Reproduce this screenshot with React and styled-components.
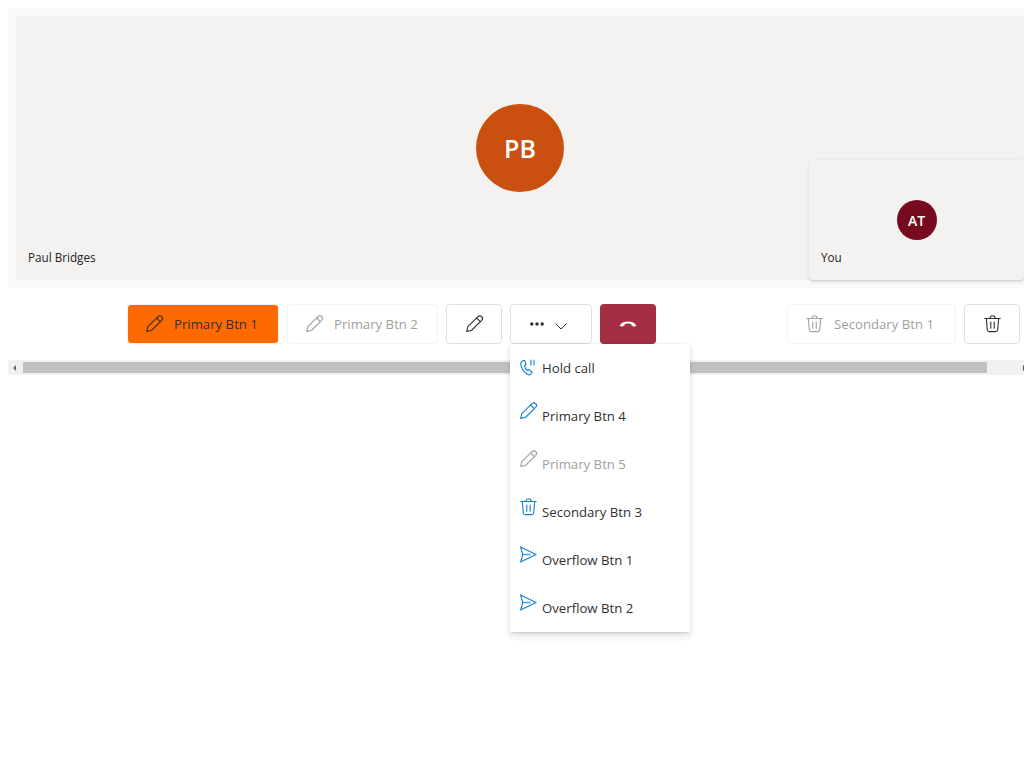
import React from "react";
import styled, { createGlobalStyle } from "styled-components";

// style

const GlobalStyle = createGlobalStyle`
  body {
    margin: 8px 0 0 8px;
    background: #ffffff;
    font-family: "Open Sans", "Noto Sans", sans-serif;
    color: #252423;
  }
  #root {
    width: 1016px;
    min-height: 760px;
  }
`;

const Stage = styled.section`
  position: relative;
  height: 280px;
  padding: 8px 0 8px 8px;
  box-sizing: border-box;
  background: #faf9f8;
`;

const MainTile = styled.div`
  position: relative;
  height: 264px;
  display: flex;
  align-items: center;
  justify-content: center;
  background: #f3f2f1;
  border-radius: 4px;
`;

const LocalTile = styled(MainTile)`
  position: absolute;
  right: 0;
  bottom: 8px;
  width: 215px;
  height: 120px;
  box-shadow: 0 1.6px 3.6px rgba(0, 0, 0, 0.11), 0 0.3px 0.9px rgba(0, 0, 0, 0.07);
`;

const Avatar = styled.div`
  width: ${(p) => p.$size}px;
  height: ${(p) => p.$size}px;
  display: flex;
  align-items: center;
  justify-content: center;
  border-radius: 50%;
  background: ${(p) => p.$color};
  color: #ffffff;
  font-size: ${(p) => p.$fontSize}px;
  font-weight: 600;
`;

const Label = styled.span`
  position: absolute;
  left: 12px;
  bottom: 15px;
  font-size: 11.7px;
  line-height: 16px;
  font-weight: 500;
  color: #252423;
`;

const Toolbar = styled.div`
  display: flex;
  padding: 16px 0 16px 119px;
`;

const Group = styled.div`
  display: flex;
  gap: 8px;
  margin-left: ${(p) => p.$offset || 0}px;
`;

const Button = styled.button`
  width: ${(p) => p.$width}px;
  height: 40px;
  padding: 0 0 0 ${(p) => p.$inset}px;
  display: flex;
  align-items: center;
  gap: ${(p) => p.$gap || 0}px;
  box-sizing: border-box;
  border: 1px solid ${(p) => (p.$disabled ? "#f3f2f1" : "#e1dfdd")};
  border-radius: 4px;
  background: #ffffff;
  color: ${(p) => (p.$disabled ? "#a19f9d" : "#323130")};
  font-family: inherit;
  font-size: 13.2px;
  white-space: nowrap;
`;

const PrimaryButton = styled(Button)`
  border-color: #f3f2f1;
  background: #ff6a00;
`;

const EndCallButton = styled(Button)`
  border: none;
  background: #a42e43;
  color: #ffffff;
`;

const MoreWrap = styled.div`
  position: relative;
`;

const Menu = styled.ul`
  position: absolute;
  top: 40px;
  left: 0;
  z-index: 2;
  width: 180px;
  margin: 0;
  padding: 0;
  list-style: none;
  background: #ffffff;
  border-radius: 2px;
  box-shadow: 0 3.2px 7.2px rgba(0, 0, 0, 0.13), 0 0.6px 1.8px rgba(0, 0, 0, 0.11);
`;

const MenuItem = styled.li`
  height: 48px;
  padding-left: 10px;
  display: flex;
  align-items: center;
  gap: 4px;
  font-size: 13.2px;
  color: ${(p) => (p.$disabled ? "#a19f9d" : "#323130")};

  svg {
    margin-bottom: ${(p) => p.$raise}px;
    color: ${(p) => (p.$disabled ? "#a19f9d" : "#0f7fd6")};
  }
`;

const ScrollTrack = styled.div`
  height: 15px;
  display: flex;
  overflow: hidden;
  background: #f1f1f1;
`;

const ScrollButton = styled.div`
  flex: none;
  width: 15px;
  display: flex;
  align-items: center;
  padding-left: ${(p) => p.$inset}px;
  box-sizing: border-box;
`;

const ScrollThumb = styled.div`
  flex: none;
  width: 964px;
  height: 11px;
  margin: 2px 32px 2px 0;
  background: #c1c1c1;
`;

const Arrow = styled.span`
  width: 0;
  height: 0;
  border-top: 3.5px solid transparent;
  border-bottom: 3.5px solid transparent;
  border-right: ${(p) => (p.$right ? "0" : "3.5px solid #6e6e6e")};
  border-left: ${(p) => (p.$right ? "3.5px solid #505050" : "0")};
`;

// icons

const Icon = ({ children }) => (
  <svg width="18" height="18" viewBox="0 0 18 18" fill="none" stroke="currentColor" strokeWidth="1.1" strokeLinejoin="round" strokeLinecap="round" style={{ flex: "none" }}>
    {children}
  </svg>
);

const Pencil = () => (
  <Icon>
    <path d="M.7 16.4 1.7 12c.07-.3.2-.5.4-.7L12 1.6a2.6 2.6 0 0 1 3.7 3.7L5.9 15c-.2.2-.45.35-.75.42L.7 16.4Z" />
    <path d="M10.6 3 14.3 6.7" />
  </Icon>
);

const Trash = () => (
  <Icon>
    <path d="M.8 3.5h15.4" />
    <path d="M5.8 3.5a2.7 2.7 0 0 1 5.4 0" />
    <path d="M2.3 3.5 3.3 15a2 2 0 0 0 2 1.6h6.4a2 2 0 0 0 2-1.6l1-11.5" />
    <path d="M6.8 7v6.3M10.2 7v6.3" />
  </Icon>
);

const Send = () => (
  <Icon>
    <path d="M.6 1 16 8.5.6 16l2.2-7.5L.6 1Z" />
    <path d="M3 8.5h7" strokeWidth="1.6" strokeOpacity="0.75" />
  </Icon>
);

const HoldCall = () => (
  <Icon>
    <path d="M4.6 1.2 2.5 2C.9 2.7.5 4.6 1 6.6c.9 3.5 3.2 6.6 6.3 8.6 1.5.9 3.2.7 4-.5l.8-1.6-3.2-2.6-1.6 1c-1.3-1-2.5-3-2.9-4.6L6 5.6 4.6 1.2Z" />
    <path d="M11 1v5M14 1v5" />
  </Icon>
);

const Dots = () => (
  <svg width="14" height="4" viewBox="0 0 14 4" fill="currentColor" style={{ flex: "none" }}>
    <circle cx="1.8" cy="2" r="1.7" />
    <circle cx="7" cy="2" r="1.7" />
    <circle cx="12.2" cy="2" r="1.7" />
  </svg>
);

const Chevron = () => (
  <svg width="12" height="7" viewBox="0 0 12 7" fill="none" stroke="currentColor" strokeWidth="1" style={{ flex: "none", marginTop: 5 }}>
    <path d="M.5.5 6 6 11.5.5" />
  </svg>
);

const HangUp = () => (
  <svg width="16" height="6" viewBox="0 0 16 6" fill="currentColor" style={{ flex: "none" }}>
    <path d="M.3 3.6C3-.6 13-.6 15.7 3.6c.3.5.2 1.2-.2 1.6-.3.3-.7.4-1.1.3l-2.2-.5c-.5-.1-.8-.5-.8-1V3c-2.2-.7-4.6-.7-6.800 0v1c0 .5-.3.9-.8 1l-2.200.5c-.4.1-.8 0-1.100-.3-.4-.4-.5-1.100-.2-1.600Z" />
  </svg>
);

// code

const MENU_ITEMS = [
  { id: "hold", label: "Hold call", icon: <HoldCall />, raise: 0 },
  { id: "p4", label: "Primary Btn 4", icon: <Pencil />, raise: 11 },
  { id: "p5", label: "Primary Btn 5", icon: <Pencil />, raise: 11, disabled: true },
  { id: "s3", label: "Secondary Btn 3", icon: <Trash />, raise: 11 },
  { id: "o1", label: "Overflow Btn 1", icon: <Send />, raise: 10 },
  { id: "o2", label: "Overflow Btn 2", icon: <Send />, raise: 10 },
];

function App() {
  return (
    <>
      <GlobalStyle />
      <Stage>
        <MainTile>
          <Avatar $size={88} $color="#ca5010" $fontSize={25}>PB</Avatar>
          <Label>Paul Bridges</Label>
        </MainTile>
        <LocalTile>
          <Avatar $size={40} $color="#750b1c" $fontSize={14}>AT</Avatar>
          <Label>You</Label>
        </LocalTile>
      </Stage>
      <Toolbar>
        <Group>
          <PrimaryButton $width={152} $inset={18} $gap={10}>
            <Pencil />
            Primary Btn 1
          </PrimaryButton>
          <Button $width={151} $inset={18} $gap={10} $disabled>
            <Pencil />
            Primary Btn 2
          </Button>
          <Button $width={56} $inset={19}>
            <Pencil />
          </Button>
          <MoreWrap>
            <Button $width={82} $inset={19} $gap={11}>
              <Dots />
              <Chevron />
            </Button>
            <Menu>
              {MENU_ITEMS.map((item) => (
                <MenuItem key={item.id} $raise={item.raise} $disabled={item.disabled}>
                  {item.icon}
                  {item.label}
                </MenuItem>
              ))}
            </Menu>
          </MoreWrap>
          <EndCallButton $width={56} $inset={20}>
            <HangUp />
          </EndCallButton>
        </Group>
        <Group $offset={131}>
          <Button $width={169} $inset={18} $gap={10} $disabled>
            <Trash />
            Secondary Btn 1
          </Button>
          <Button $width={56} $inset={19}>
            <Trash />
          </Button>
        </Group>
      </Toolbar>
      <ScrollTrack>
        <ScrollButton $inset={5}>
          <Arrow />
        </ScrollButton>
        <ScrollThumb />
        <ScrollButton $inset={4}>
          <Arrow $right />
        </ScrollButton>
      </ScrollTrack>
    </>
  );
}

export default App;
